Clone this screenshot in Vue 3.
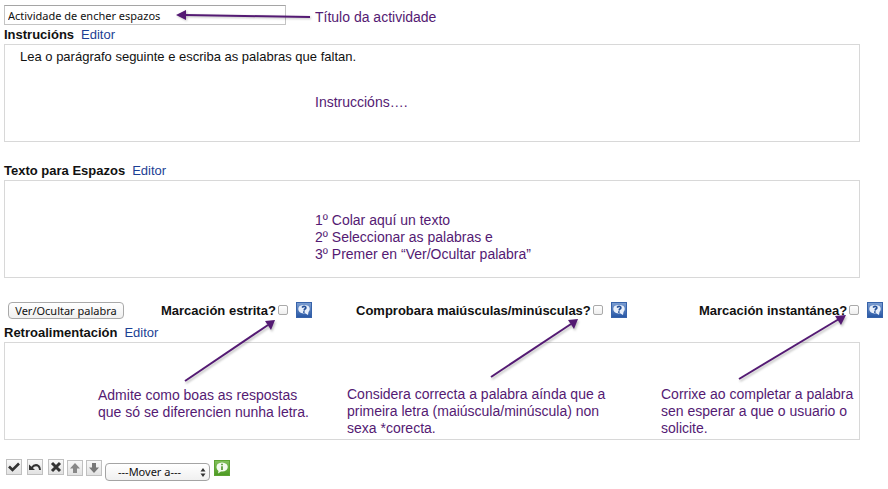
<script setup>
import { ref } from 'vue'

const title = ref('Actividade de encher espazos')
const instructions = ref('Lea o parágrafo seguinte e escriba as palabras que faltan.')
const gapText = ref('')
const feedback = ref('')
const target = ref('')

const gapSteps = [
  '1º Colar aquí un texto',
  '2º Seleccionar as palabras e',
  '3º Premer en “Ver/Ocultar palabra”'
]

const options = [
  {
    id: 'strict',
    label: 'Marcación estrita?',
    note: 'Admite como boas as respostas\nque só se diferencien nunha letra.',
    place: 'callout-strict',
    w: 104,
    h: 72,
    from: [7, 67],
    to: [90, 11],
    tip: '97,6 87,7 93,16'
  },
  {
    id: 'case',
    label: 'Comprobara maiúsculas/minúsculas?',
    note: 'Considera correcta a palabra aínda que a\nprimeira letra (maiúscula/minúscula) non\nsexa *corecta.',
    place: 'callout-case',
    w: 104,
    h: 72,
    from: [7, 64],
    to: [87, 11],
    tip: '94,6 84,7 90,16'
  },
  {
    id: 'instant',
    label: 'Marcación instantánea?',
    note: 'Corrixe ao completar a palabra\nsen esperar a que o usuario o\nsolicite.',
    place: 'callout-instant',
    w: 124,
    h: 76,
    from: [7, 70],
    to: [107, 10],
    tip: '114,6 103,7 109,16'
  }
]
</script>

<template>
  <form class="page" @submit.prevent>
    <div class="title-row">
      <input v-model="title" class="title-input" type="text" aria-label="Título" />
      <svg class="title-arrow" width="136" height="16" viewBox="0 0 136 16" aria-hidden="true">
        <path d="M9 7 L134 9" stroke="#541a73" stroke-width="2" />
        <path d="M0 7 L10 2 V12 Z" fill="#541a73" />
      </svg>
      <p class="note title-note">Título da actividade</p>
    </div>

    <section>
      <div class="heading">
        <label for="instructions">Instrucións</label>
        <a href="#instructions">Editor</a>
      </div>
      <div class="field">
        <textarea id="instructions" v-model="instructions"></textarea>
        <p class="note instructions-note">Instruccións….</p>
      </div>
    </section>

    <section class="spaced">
      <div class="heading">
        <label for="gaps">Texto para Espazos</label>
        <a href="#gaps">Editor</a>
      </div>
      <div class="field">
        <textarea id="gaps" v-model="gapText"></textarea>
        <div class="gaps-note">
          <p v-for="step in gapSteps" :key="step" class="note">{{ step }}</p>
        </div>
      </div>
    </section>

    <div class="options spaced">
      <div><button class="toggle" type="button">Ver/Ocultar palabra</button></div>
      <div v-for="o in options" :key="o.id" class="option">
        <label :for="o.id">{{ o.label }}</label>
        <input :id="o.id" type="checkbox" />
        <button class="help" type="button" aria-label="Axuda">
          <svg width="16" height="16" viewBox="0 0 16 16">
            <defs>
              <linearGradient :id="'blue-' + o.id" x2="0" y2="1">
                <stop stop-color="#7d9fd2" />
                <stop offset="1" stop-color="#2555a4" />
              </linearGradient>
            </defs>
            <rect x=".5" y=".5" width="15" height="15" :fill="`url(#blue-${o.id})`" stroke="#3763aa" />
            <path d="M3.500 4 Q8 2 12.500 4 Q15 7 12.500 10 L12 13 L9 11.300 Q5 11.800 3.500 10 Q1 7 3.500 4Z" fill="#e8effa" />
            <path d="M6 5.500 Q8 3.500 9.700 5 Q10.300 6.500 8.500 7.300 L8 8.500" fill="none" stroke="#234f98" stroke-width="1.600" />
            <rect x="7" y="9.300" width="1.700" height="1.500" fill="#234f98" />
          </svg>
        </button>
        <div class="callout" :class="o.place">
          <svg :width="o.w" :height="o.h" :viewBox="`0 0 ${o.w} ${o.h}`" aria-hidden="true">
            <line :x1="o.from[0]" :y1="o.from[1]" :x2="o.to[0]" :y2="o.to[1]" stroke="#541a73" stroke-width="2" />
            <polygon :points="o.tip" fill="#541a73" />
          </svg>
          <p class="note">{{ o.note }}</p>
        </div>
      </div>
    </div>

    <section>
      <div class="heading">
        <label for="feedback">Retroalimentación</label>
        <a href="#feedback">Editor</a>
      </div>
      <div class="field">
        <textarea id="feedback" v-model="feedback"></textarea>
      </div>
    </section>

    <div class="toolbar">
      <div class="tools">
        <button class="tool" type="button" aria-label="Feito">
          <svg width="14" height="14" viewBox="0 0 14 14"><path d="M2 6.500 L5.500 10 L12 3.500" fill="none" stroke="#333" stroke-width="2.600" /></svg>
        </button>
        <button class="tool" type="button" aria-label="Desfacer">
          <svg width="14" height="14" viewBox="0 0 14 14">
            <path d="M3.500 8 Q7 3.500 10.500 6 Q12 7.500 12 10" fill="none" stroke="#333" stroke-width="2" />
            <path d="M1 4.500 V10 H7Z" fill="#333" />
          </svg>
        </button>
        <button class="tool" type="button" aria-label="Eliminar">
          <svg width="14" height="14" viewBox="0 0 14 14"><path d="M3 3 L11 11 M11 3 L3 11" stroke="#333" stroke-width="3" /></svg>
        </button>
      </div>
      <div class="tools moves">
        <button class="tool" type="button" aria-label="Subir">
          <svg width="14" height="14" viewBox="0 0 14 14"><path d="M7 2 L12 7.500 H9 V12 H5 V7.500 H2Z" fill="#888" /></svg>
        </button>
        <button class="tool" type="button" aria-label="Baixar">
          <svg width="14" height="14" viewBox="0 0 14 14"><path d="M7 12 L12 6.500 H9 V2 H5 V6.500 H2Z" fill="#777" /></svg>
        </button>
      </div>
      <div class="move">
        <select v-model="target" aria-label="Mover a">
          <option value="">---Mover a---</option>
        </select>
        <svg class="carets" width="6" height="9" viewBox="0 0 6 9" aria-hidden="true">
          <path d="M3 0 L5.500 3.500 H.5Z M3 9 L5.500 5.500 H.5Z" fill="#333" />
        </svg>
      </div>
      <button class="info" type="button" aria-label="Información">
        <svg width="16" height="16" viewBox="0 0 16 16">
          <defs>
            <linearGradient id="green" x2="0" y2="1">
              <stop stop-color="#83c05c" />
              <stop offset="1" stop-color="#4c9a22" />
            </linearGradient>
          </defs>
          <rect x=".5" y=".5" width="15" height="15" fill="url(#green)" stroke="#5da332" />
          <path d="M3.500 4 Q8 1 12.500 4 Q15 7 12.500 10 Q10 12 7 11.500 L4 13.500 L4.500 11 Q1 8 3.500 4Z" fill="#f3faee" />
          <path d="M8 3.800 V5.200 M8 6.200 V10" stroke="#4c8f28" stroke-width="1.600" />
        </svg>
      </button>
    </div>
  </form>
</template>

<style>
body {
  margin: 0;
  background: #fff;
}
</style>

<style scoped>
.page {
  padding: 5px 0 0 4px;
  font-family: "Liberation Sans", Arial, sans-serif;
  font-size: 13px;
  color: #111;
}

.page * {
  box-sizing: border-box;
}

button {
  padding: 0;
  border: 0;
  background: none;
}

button svg {
  display: block;
}

.title-row {
  position: relative;
  display: flex;
}

.title-input {
  width: 282px;
  height: 20px;
  padding: 0 3px;
  border: 1px solid #c4c4c4;
  border-top-color: #a5a5a5;
  font-family: "Noto Sans", sans-serif;
  font-size: 11px;
  color: #111;
}

.note {
  margin: 0;
  font-size: 14px;
  line-height: 17px;
  color: #541a73;
  white-space: pre;
}

.title-arrow {
  position: absolute;
  left: 172px;
  top: 3px;
  filter: drop-shadow(1px 1px 1px rgba(0, 0, 0, 0.25));
}

.title-note {
  position: absolute;
  left: 311px;
  top: 4px;
}

.spaced {
  margin-top: 19px;
}

.heading {
  display: flex;
  gap: 7px;
  line-height: 19px;
}

label {
  font-weight: bold;
}

a {
  color: #1c3f94;
  text-decoration: none;
}

.field {
  position: relative;
  margin-right: 28px;
}

textarea {
  display: block;
  width: 100%;
  height: 98px;
  padding: 4px 15px;
  border: 1px solid #d8d8d8;
  background: #fff;
  font: inherit;
  line-height: 16px;
  color: #111;
  resize: none;
}

.instructions-note,
.gaps-note {
  position: absolute;
  left: 311px;
  top: 50px;
}

.gaps-note {
  top: 32px;
}

.options {
  display: grid;
  grid-template-columns: 153fr 195fr 343fr 189fr;
  align-items: center;
  height: 26px;
  padding-left: 4px;
}

.toggle {
  display: block;
  width: 116px;
  height: 17px;
  border: 1px solid #a9a9a9;
  border-radius: 4px;
  background: linear-gradient(#fff, #f0f0f0);
  font-family: "Noto Sans", sans-serif;
  font-size: 11px;
  line-height: 15px;
  color: #111;
  white-space: nowrap;
}

.option {
  position: relative;
  display: flex;
  align-items: center;
  white-space: nowrap;
}

.option input {
  width: 10px;
  height: 10px;
  margin: 0 8px 0 2px;
  border: 1px solid #aaa;
  border-radius: 2px;
  background: linear-gradient(#fff, #eee);
  appearance: none;
}

.option input:checked {
  background: #541a73;
}

.callout {
  position: absolute;
  z-index: 1;
  display: flex;
  flex-direction: column;
  align-items: flex-start;
  gap: 1px;
  pointer-events: none;
}

.callout svg {
  filter: drop-shadow(1px 2px 1px rgba(0, 0, 0, 0.25));
}

.callout-strict {
  left: -63px;
  top: 12px;
}

.callout-strict svg {
  margin-left: 80px;
}

.callout-case {
  left: -9px;
  top: 11px;
}

.callout-case svg {
  margin-left: 137px;
}

.callout-instant {
  left: -38px;
  top: 7px;
}

.callout-instant svg {
  margin-left: 71px;
}

.toolbar {
  display: flex;
  align-items: flex-start;
  padding: 19px 0 4px 2px;
}

.tools {
  display: flex;
  gap: 5px;
}

.moves {
  gap: 3px;
  padding: 1px 3px 0;
}

.tool {
  width: 16px;
  height: 16px;
  border: 1px solid #c0c0c0;
  background: linear-gradient(#f8f8f8, #e2e2e2);
}

.move {
  position: relative;
  margin: 4px 4px 0 0;
}

select {
  display: block;
  width: 105px;
  height: 18px;
  padding: 0 12px;
  border: 1px solid #a4a4a4;
  border-radius: 4px;
  background: linear-gradient(#fff, #f0f0f0);
  font-family: "Noto Sans", sans-serif;
  font-size: 11px;
  line-height: 16px;
  color: #111;
  appearance: none;
}

.carets {
  position: absolute;
  right: 4px;
  top: 5px;
}

.info {
  margin-top: 1px;
}
</style>
